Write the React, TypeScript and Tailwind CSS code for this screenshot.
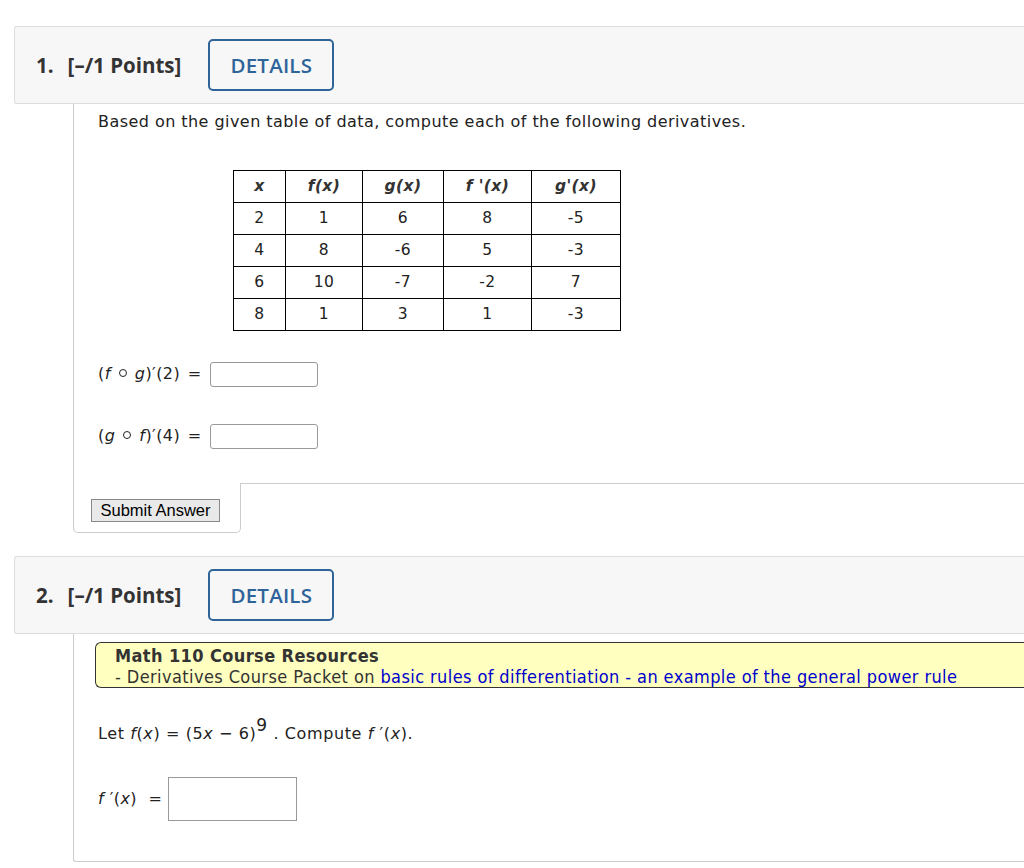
import React from 'react';

const verdana = { fontFamily: '"DejaVu Sans", Verdana, sans-serif' };

interface HeaderProps {
  num: number;
}

const QuestionHeader: React.FC<HeaderProps> = ({ num }) => (
  <div className="flex items-center h-[78px] bg-[#f7f7f7] border border-r-0 border-[#dddddd] rounded-l-[3px] pl-[21px] font-['Open_Sans',sans-serif] text-[#333333]">
    <span className="text-[20.5px] font-bold">{num}.</span>
    <span className="text-[20.5px] font-bold ml-[14px]">[–/1 Points]</span>
    <button className="ml-[27px] w-[126px] h-[52px] border-2 border-[#2f6499] rounded-[5px] bg-[#f7f7f7] text-[#2f6499] text-[20.5px] font-semibold tracking-[0.2px]">
      DETAILS
    </button>
  </div>
);

const Ring: React.FC = () => (
  <span className="inline-block w-[8px] h-[8px] border-[1.5px] border-[#222222] rounded-full mx-[8px] align-[2px]" />
);

const rows = [
  ['2', '1', '6', '8', '-5'],
  ['4', '8', '-6', '5', '-3'],
  ['6', '10', '-7', '-2', '7'],
  ['8', '1', '3', '1', '-3'],
];

const colW = ['w-[52px]', 'w-[77px]', 'w-[81px]', 'w-[88px]', 'w-[89px]'];

const App: React.FC = () => {
  return (
    <div className="bg-white min-h-[868px] pt-[26px] pl-[14px] text-[#222222]" style={verdana}>
      {/* Questão 1 */}
      <QuestionHeader num={1} />
      <div className="ml-[59px] border-l border-[#cccccc] pl-[24px] pt-[7px] pb-[34px]">
        <p className="text-[16px] tracking-[0.45px] leading-[22px]">
          Based on the given table of data, compute each of the following derivatives.
        </p>

        <table className="ml-[135px] mt-[37px] border-collapse text-[15.5px] tracking-[0.4px] text-[#222222]">
          <thead>
            <tr className="h-[32px]">
              <th className={`${colW[0]} border border-black font-bold italic text-[#333]`}>x</th>
              <th className={`${colW[1]} border border-black font-bold italic text-[#333]`}>f(x)</th>
              <th className={`${colW[2]} border border-black font-bold italic text-[#333]`}>g(x)</th>
              <th className={`${colW[3]} border border-black font-bold italic text-[#333]`}>f '(x)</th>
              <th className={`${colW[4]} border border-black font-bold italic text-[#333]`}>g'(x)</th>
            </tr>
          </thead>
          <tbody>
            {rows.map((r, i) => (
              <tr key={i} className="h-[32px]">
                {r.map((c, j) => (
                  <td key={j} className="border border-black text-center">
                    {c}
                  </td>
                ))}
              </tr>
            ))}
          </tbody>
        </table>

        <div className="mt-[30px] flex items-center h-[26px]">
          <span className="text-[16px] tracking-[0.45px] w-[112px] whitespace-nowrap">
            (<i>f</i><Ring /><i>g</i>)′(2) <span className="ml-[2px]">=</span>
          </span>
          <input className="w-[108px] h-[25px] border border-[#999999] rounded-[3px] bg-white" />
        </div>
        <div className="mt-[36px] flex items-center h-[26px]">
          <span className="text-[16px] tracking-[0.45px] w-[112px] whitespace-nowrap">
            (<i>g</i><Ring /><i>f</i>)′(4) <span className="ml-[2px]">=</span>
          </span>
          <input className="w-[108px] h-[25px] border border-[#999999] rounded-[3px] bg-white" />
        </div>
      </div>
      <div className="ml-[59px] flex">
        <div className="w-[168px] h-[50px] border-l border-b border-r border-[#cccccc] rounded-b-[5px] pl-[17px] pt-[16px]">
          <button className="h-[23px] w-[129px] bg-[#e9e9e9] border border-[#888888] text-[16.5px] text-black font-['Liberation_Sans',Arial,sans-serif] leading-none">
            Submit Answer
          </button>
        </div>
        <div className="flex-1 border-t border-[#cccccc]" />
      </div>

      {/* Questão 2 */}
      <div className="mt-[23px]">
        <QuestionHeader num={2} />
        <div className="ml-[59px] border-l border-b border-[#cccccc] rounded-bl-[3px] pt-[8px] pb-[40px]">
          <div className="ml-[21px] h-[46px] border border-r-0 border-[#333333] rounded-l-[6px] bg-[#ffffc0] pl-[19px] pt-[2px] text-[18px] tracking-[0.4px] leading-[21px] font-['DejaVu_Sans_Condensed','Liberation_Sans_Narrow',sans-serif]">
            <div className="font-bold text-[#333333]">Math 110 Course Resources</div>
            <div className="text-[#333333]">
              - Derivatives Course Packet on{' '}
              <span className="text-[#0000cc]">basic rules of differentiation - an example of the general power rule</span>
            </div>
          </div>

          <p className="ml-[24px] mt-[35px] text-[16px] tracking-[0.6px] leading-[22px]">
            Let <i>f</i>(<i>x</i>) = (5<i>x</i> − 6)<sup className="text-[17px] relative -top-[8px]">9</sup> . Compute <i>f</i> ′(<i>x</i>).
          </p>

          <div className="ml-[24px] mt-[32px] flex items-center">
            <span className="text-[16px] tracking-[0.45px] w-[70px] whitespace-nowrap">
              <i>f</i> ′(<i>x</i>) <span className="ml-[6px]">=</span>
            </span>
            <input className="w-[129px] h-[44px] border border-[#999999] bg-white" />
          </div>
        </div>
      </div>
    </div>
  );
};

export default App;
